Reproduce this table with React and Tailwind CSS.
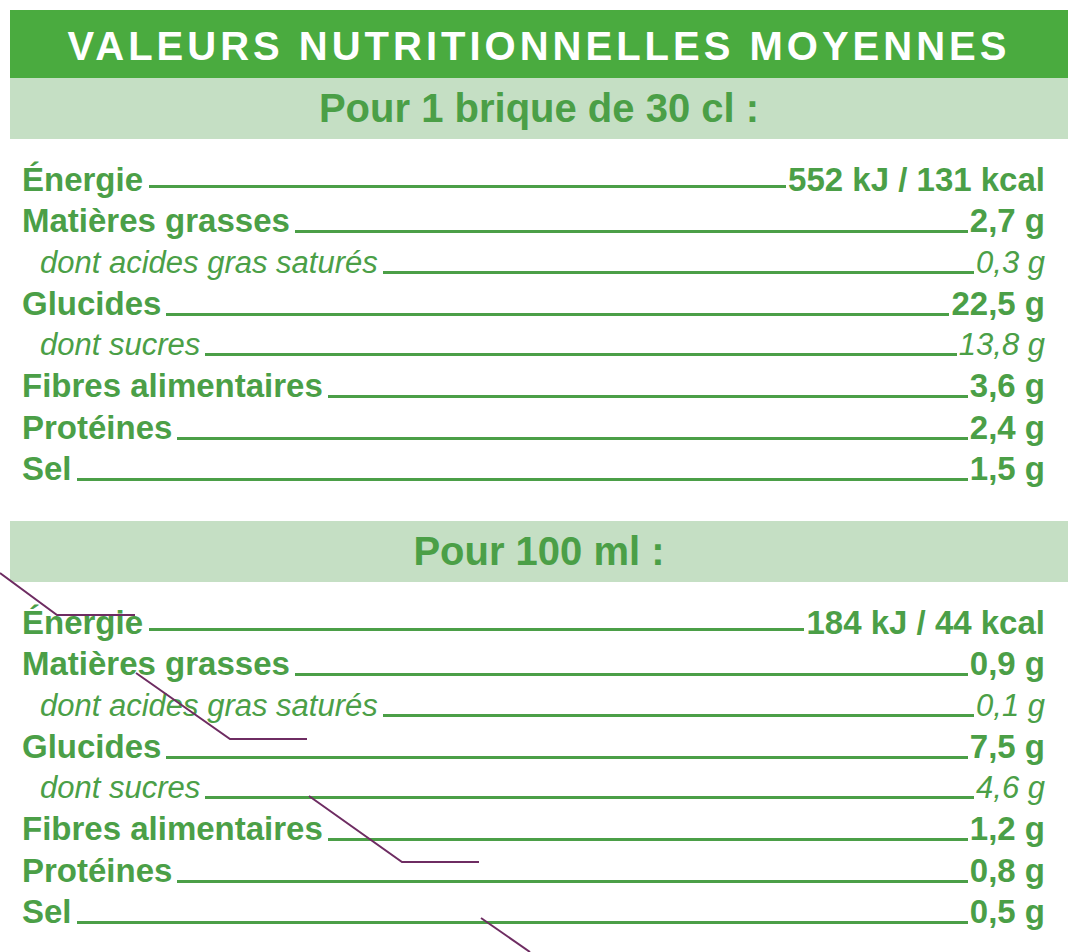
import React from "react";

const section1 = [
  { label: "Énergie", value: "552 kJ / 131 kcal", kind: "bold", energy: true },
  { label: "Matières grasses", value: "2,7 g", kind: "bold" },
  { label: "dont acides gras saturés", value: "0,3 g", kind: "sub" },
  { label: "Glucides", value: "22,5 g", kind: "bold" },
  { label: "dont sucres", value: "13,8 g", kind: "sub" },
  { label: "Fibres alimentaires", value: "3,6 g", kind: "bold" },
  { label: "Protéines", value: "2,4 g", kind: "bold" },
  { label: "Sel", value: "1,5 g", kind: "bold" },
];

const section2 = [
  { label: "Énergie", value: "184 kJ / 44 kcal", kind: "bold", energy: true },
  { label: "Matières grasses", value: "0,9 g", kind: "bold" },
  { label: "dont acides gras saturés", value: "0,1 g", kind: "sub" },
  { label: "Glucides", value: "7,5 g", kind: "bold" },
  { label: "dont sucres", value: "4,6 g", kind: "sub" },
  { label: "Fibres alimentaires", value: "1,2 g", kind: "bold" },
  { label: "Protéines", value: "0,8 g", kind: "bold" },
  { label: "Sel", value: "0,5 g", kind: "bold" },
];

function Row({ row }) {
  const sub = row.kind === "sub";
  return (
    <div className="flex items-baseline h-[41.25px] leading-[41.25px]">
      <span
        className={
          sub
            ? "pl-[18px] text-[31px] italic font-normal whitespace-nowrap"
            : "text-[33px] font-bold whitespace-nowrap"
        }
      >
        {row.label}
      </span>
      <span
        className={
          row.energy
            ? "flex-1 h-[3px] bg-[#4b9f47] ml-[6px] mr-[2px] -translate-y-[3px]"
            : "flex-1 h-[3px] bg-[#4b9f47] ml-[5px] mr-[2px] translate-y-[1px]"
        }
      />
      <span
        className={
          sub
            ? "text-[31px] italic font-normal whitespace-nowrap"
            : "text-[33px] font-bold whitespace-nowrap"
        }
      >
        {row.value}
      </span>
    </div>
  );
}

function Section({ title, rows }) {
  return (
    <div>
      <div className="h-[61px] leading-[61px] bg-[#c5dfc4] text-center text-[40px] font-bold text-[#4b9f47]">
        {title}
      </div>
      <div className="pt-[20px] pl-[12px] pr-[23px] text-[#4b9f47]">
        {rows.map((r, i) => (
          <Row key={i} row={r} />
        ))}
      </div>
    </div>
  );
}

export default function App() {
  return (
    <div className="relative w-[1076px] h-[952px] overflow-hidden bg-white font-['Liberation_Sans',Arial,sans-serif]">
      <div className="pt-[10px] pl-[10px] w-[1068px]">
        <div className="h-[68px] pt-[5px] leading-[63px] bg-[#4aab3f] text-white text-center text-[40px] font-bold tracking-[4px] whitespace-nowrap">
          VALEURS NUTRITIONNELLES MOYENNES
        </div>
        <Section title="Pour 1 brique de 30 cl :" rows={section1} />
        <div className="h-[32px]" />
        <Section title="Pour 100 ml :" rows={section2} />
      </div>
      <svg
        className="absolute inset-0 pointer-events-none"
        width="1076"
        height="952"
        viewBox="0 0 1076 952"
      >
        <g fill="none" stroke="#6e2c62" strokeWidth="2">
          <polyline points="0,573 57,615 135,615" />
          <polyline points="136,673 230,739 307,739" />
          <polyline points="309,796 402,862 479,862" />
          <polyline points="481,918 530,952" />
        </g>
      </svg>
    </div>
  );
}
